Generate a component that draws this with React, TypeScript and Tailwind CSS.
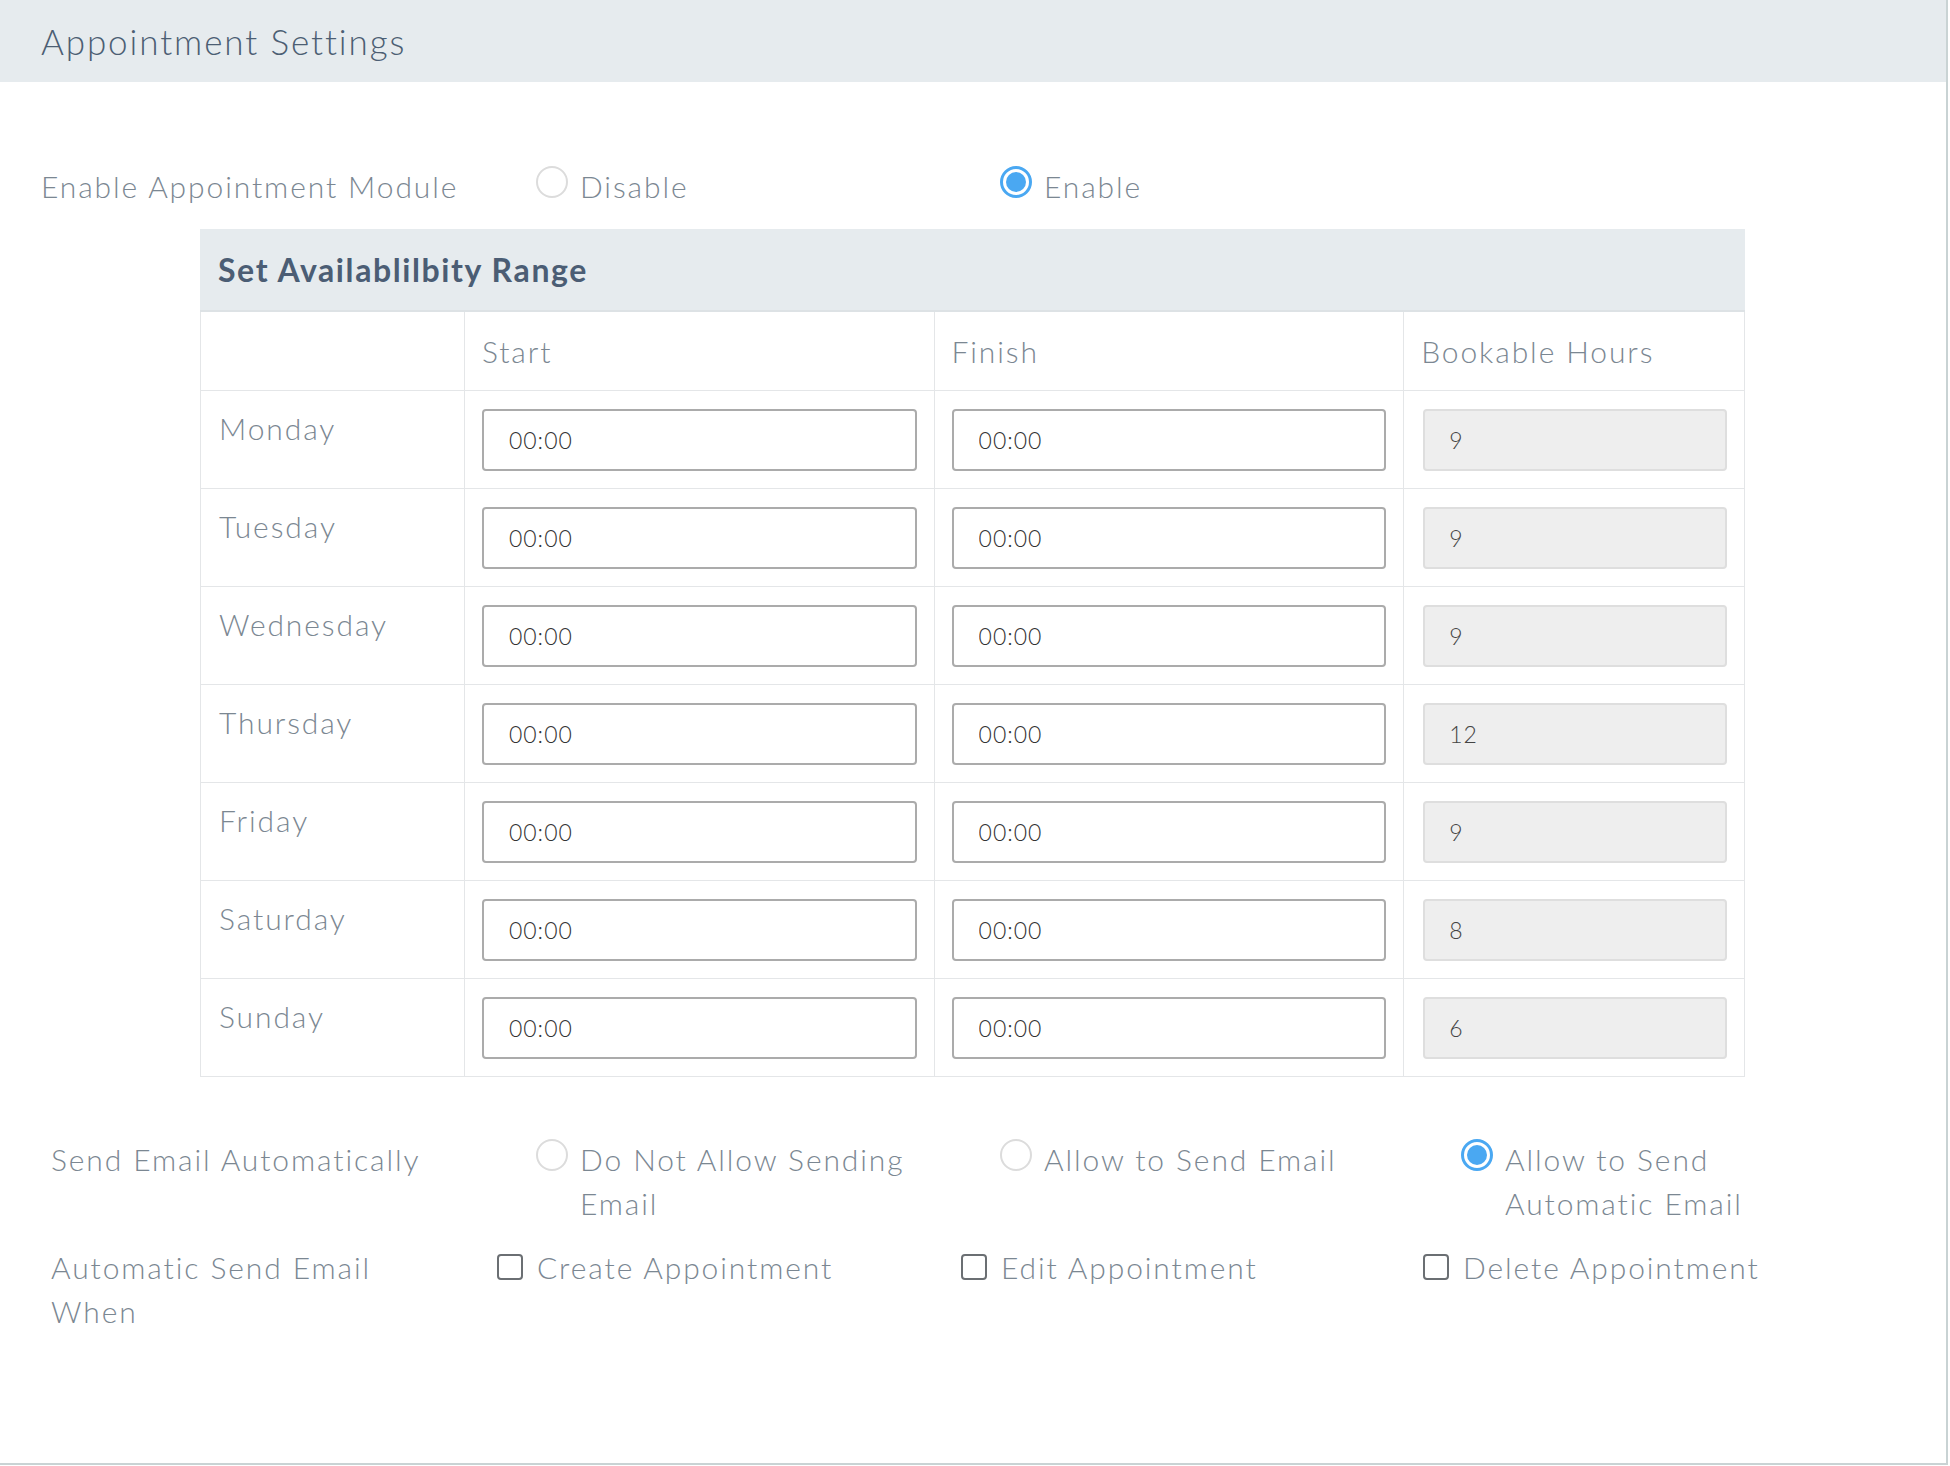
import type { ReactNode } from "react";

const days = [
  { day: "Monday", hours: "9" },
  { day: "Tuesday", hours: "9" },
  { day: "Wednesday", hours: "9" },
  { day: "Thursday", hours: "12" },
  { day: "Friday", hours: "9" },
  { day: "Saturday", hours: "8" },
  { day: "Sunday", hours: "6" },
];

const Radio = ({ checked, children }: { checked?: boolean; children: ReactNode }) => (
  <label className="flex items-start gap-[12px]">
    {checked ? (
      <span className="mt-[2px] flex h-[32px] w-[32px] shrink-0 items-center justify-center rounded-full border-[3px] border-[#4aa8f2] bg-white">
        <span className="h-[20px] w-[20px] rounded-full bg-[#4aa8f2]" />
      </span>
    ) : (
      <span className="mt-[2px] h-[32px] w-[32px] shrink-0 rounded-full border-2 border-[#dcdcdc] bg-white" />
    )}
    <span>{children}</span>
  </label>
);

const Checkbox = ({ children }: { children: ReactNode }) => (
  <label className="flex items-start gap-[14px]">
    <span className="mt-[9px] h-[26px] w-[26px] shrink-0 rounded-[4px] border-2 border-[#6b6f73] bg-white" />
    <span>{children}</span>
  </label>
);

const TimeInput = ({ value }: { value: string }) => (
  <input
    readOnly
    value={value}
    className="h-[62px] w-full rounded-[4px] border-2 border-[#ababab] bg-white px-[25px] text-[23px] tracking-[1px] text-[#333] outline-none"
  />
);

export default function App() {
  return (
    <div className="h-[1466px] w-[1950px] bg-white font-['Lato','Liberation_Sans',sans-serif] text-[30px] leading-[44px] font-light tracking-[1.9px] text-[#7b8792]">
      <div className="h-[1465px] w-[1948px] border-r-2 border-b-2 border-[#c9d3d4]">
        <header className="flex h-[82px] items-center bg-[#e6ebee] pl-[41px] text-[35px] text-[#4c5e73]">
          Appointment Settings
        </header>

        <div className="mt-[82px] flex pl-[41px]">
          <div className="w-[495px]">Enable Appointment Module</div>
          <div className="w-[464px]">
            <Radio>Disable</Radio>
          </div>
          <div className="w-[464px]">
            <Radio checked>Enable</Radio>
          </div>
        </div>

        <section className="ml-[200px] mt-[21px] w-[1545px]">
          <div className="flex h-[83px] items-center border-b-2 border-[#dde2e5] bg-[#e6ebee] pl-[18px] text-[32px] font-bold tracking-[1.6px] text-[#4b5d74]">
            Set Availablilbity Range
          </div>
          <table className="w-full border-collapse">
            <colgroup>
              <col className="w-[264px]" />
              <col className="w-[470px]" />
              <col className="w-[470px]" />
              <col className="w-[341px]" />
            </colgroup>
            <thead>
              <tr className="h-[78px]">
                <th className="border border-t-0 border-[#e4e6e8]" />
                <th className="border border-t-0 border-[#e4e6e8] px-[17px] text-left font-light">Start</th>
                <th className="border border-t-0 border-[#e4e6e8] px-[17px] text-left font-light">Finish</th>
                <th className="border border-t-0 border-[#e4e6e8] px-[17px] text-left font-light">Bookable Hours</th>
              </tr>
            </thead>
            <tbody>
              {days.map((d) => (
                <tr key={d.day} className="h-[98px]">
                  <td className="border border-[#e4e6e8] px-[18px] pt-[15px] align-top">{d.day}</td>
                  <td className="border border-[#e4e6e8] px-[17px] pt-[18px] pb-[17px]">
                    <TimeInput value="00:00" />
                  </td>
                  <td className="border border-[#e4e6e8] px-[17px] pt-[18px] pb-[17px]">
                    <TimeInput value="00:00" />
                  </td>
                  <td className="border border-[#e4e6e8] pl-[19px] pr-[17px] pt-[18px] pb-[17px]">
                    <input
                      readOnly
                      value={d.hours}
                      className="h-[62px] w-full rounded-[4px] border-2 border-[#dedede] bg-[#eeeeee] px-[24px] text-[23px] tracking-[1px] text-[#444] outline-none"
                    />
                  </td>
                </tr>
              ))}
            </tbody>
          </table>
        </section>

        <div className="mt-[60px] flex pl-[51px]">
          <div className="w-[485px]">Send Email Automatically</div>
          <div className="w-[464px]">
            <Radio>
              Do Not Allow Sending
              <br />
              Email
            </Radio>
          </div>
          <div className="w-[461px]">
            <Radio>Allow to Send Email</Radio>
          </div>
          <div className="w-[440px]">
            <Radio checked>
              Allow to Send
              <br />
              Automatic Email
            </Radio>
          </div>
        </div>

        <div className="mt-[20px] flex pl-[51px]">
          <div className="w-[446px]">
            Automatic Send Email
            <br />
            When
          </div>
          <div className="w-[464px]">
            <Checkbox>Create Appointment</Checkbox>
          </div>
          <div className="w-[462px]">
            <Checkbox>Edit Appointment</Checkbox>
          </div>
          <div className="w-[470px]">
            <Checkbox>Delete Appointment</Checkbox>
          </div>
        </div>
      </div>
    </div>
  );
}
